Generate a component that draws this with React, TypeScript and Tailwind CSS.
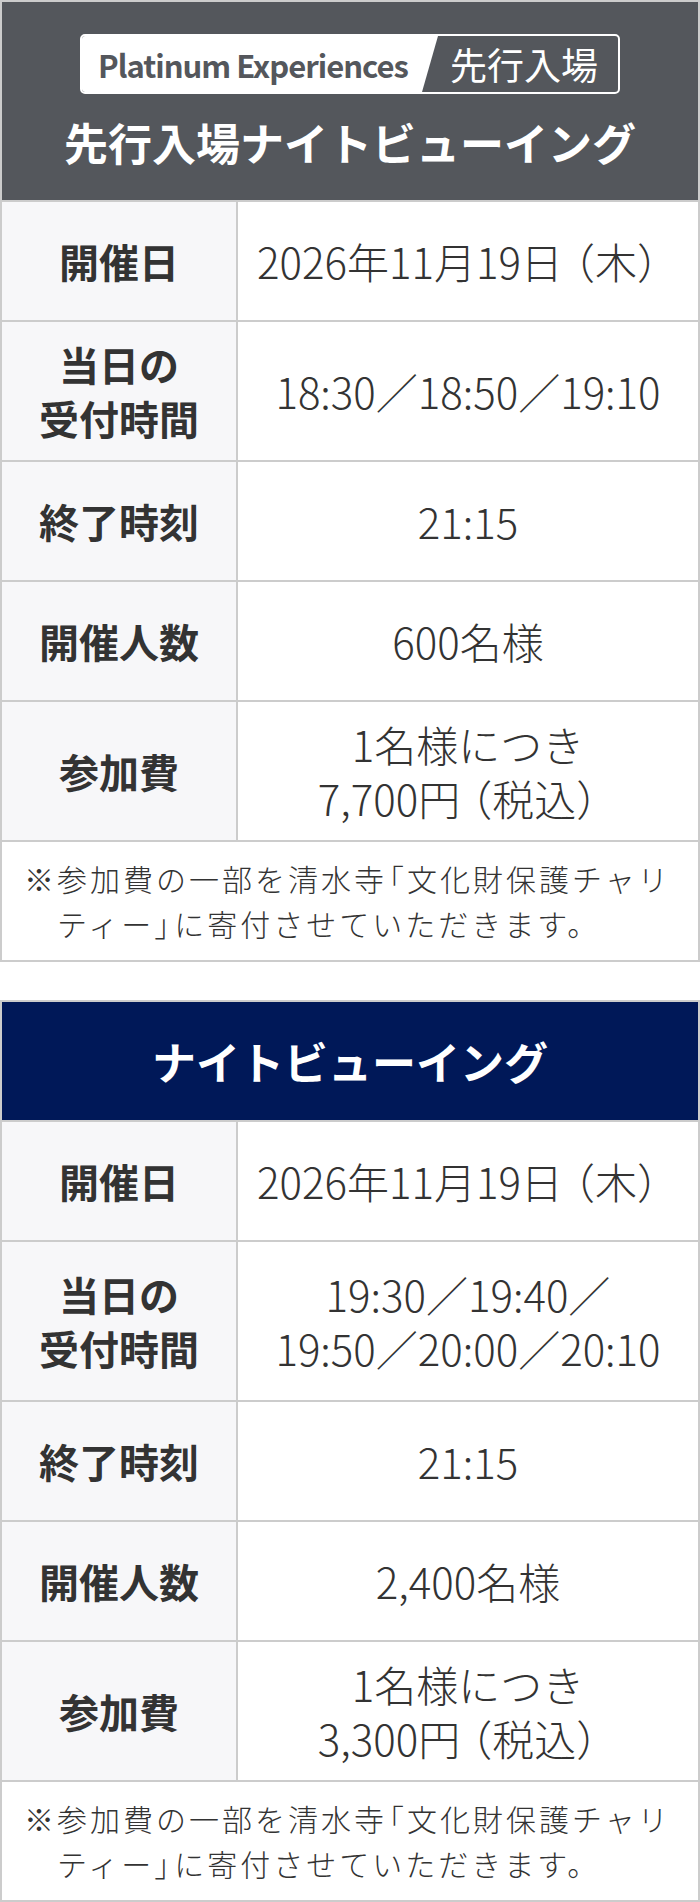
const font = "font-['Noto_Sans_CJK_JP','Noto_Sans',sans-serif]"

type Row = {
  label: string[]
  value: string[]
  h: string
}

// heights include the 2px bottom border
const early: Row[] = [
  { label: ["開催日"], value: ["2026年11月19日（木）"], h: "h-[120px]" },
  { label: ["当日の", "受付時間"], value: ["18:30／18:50／19:10"], h: "h-[140px]" },
  { label: ["終了時刻"], value: ["21:15"], h: "h-[120px]" },
  { label: ["開催人数"], value: ["600名様"], h: "h-[120px]" },
  { label: ["参加費"], value: ["1名様につき", "7,700円（税込）"], h: "h-[140px]" },
]

const night: Row[] = [
  { label: ["開催日"], value: ["2026年11月19日（木）"], h: "h-[120px]" },
  { label: ["当日の", "受付時間"], value: ["19:30／19:40／", "19:50／20:00／20:10"], h: "h-[160px]" },
  { label: ["終了時刻"], value: ["21:15"], h: "h-[120px]" },
  { label: ["開催人数"], value: ["2,400名様"], h: "h-[120px]" },
  { label: ["参加費"], value: ["1名様につき", "3,300円（税込）"], h: "h-[140px]" },
]

// the opening paren sits tight to the previous glyph in the design
const Value = ({ text }: { text: string }) => {
  const idx = text.indexOf("（")
  if (idx < 1) return <>{text}</>
  return (
    <>
      {text.slice(0, idx - 1)}
      <span className="tracking-[-10px]">{text[idx - 1]}</span>
      {text.slice(idx)}
    </>
  )
}

const InfoRow = ({ row }: { row: Row }) => (
  <div className={`flex border-b-2 border-[#cccccc] ${row.h}`}>
    <div className="w-[236px] shrink-0 bg-[#f7f7f9] border-r-2 border-[#cccccc] flex items-center justify-center text-center font-bold text-[40px] leading-[54px] text-[#333333]">
      <p className="whitespace-nowrap">
        {row.label.map((l, i) => (
          <span key={i}>
            {i > 0 && <br />}
            {l}
          </span>
        ))}
      </p>
    </div>
    <div className="flex-1 flex items-center justify-center text-center font-light text-[42px] leading-[54px] text-[#333333]">
      <p className="whitespace-nowrap">
        {row.value.map((l, i) => (
          <span key={i}>
            {i > 0 && <br />}
            <Value text={l} />
          </span>
        ))}
      </p>
    </div>
  </div>
)

const Note = () => (
  <div className="h-[118px] flex items-center pl-[22px] pr-[8px] font-light text-[30px] leading-[45px] tracking-[3px] text-[#333333]">
    <div className="flex">
      <span className="shrink-0">※</span>
      <span>
        参加費の一部を清水<span className="tracking-[-10px]">寺</span>「文化財保護チャリ
        <br />
        ティー<span className="tracking-[-10px]">」</span>に寄付させていただきます。
      </span>
    </div>
  </div>
)

const Badge = () => (
  <div className="w-[540px] h-[60px] flex rounded-[5px] border-2 border-white overflow-hidden">
    <div className="w-[356px] shrink-0 bg-white flex items-center pl-[16px] [clip-path:polygon(0_0,100%_0,calc(100%-16px)_100%,0_100%)]">
      <span className="text-[31px] tracking-[-1px] font-bold text-[#54575c] leading-none whitespace-nowrap">
        Platinum Experiences
      </span>
    </div>
    <div className="flex-1 -ml-[8px] flex items-center justify-center text-[37px] text-white leading-none">
      先行入場
    </div>
  </div>
)

export default function App() {
  return (
    <div className={`${font} w-[700px] bg-white`}>
      {/* 先行入場ナイトビューイング */}
      <section className="border-2 border-[#cccccc]">
        <div className="h-[200px] bg-[#54575c] border-b-2 border-[#cccccc] flex flex-col items-center pt-[32px]">
          <Badge />
          <h2 className="mt-[26px] text-[44px] leading-[44px] font-bold text-white">
            先行入場ナイトビューイング
          </h2>
        </div>
        {early.map((r, i) => (
          <InfoRow key={i} row={r} />
        ))}
        <Note />
      </section>

      {/* ナイトビューイング */}
      <section className="mt-[38px] border-2 border-[#cccccc]">
        <div className="h-[120px] bg-[#001858] border-b-2 border-[#cccccc] flex items-center justify-center">
          <h2 className="text-[44px] leading-[44px] font-bold text-white">ナイトビューイング</h2>
        </div>
        {night.map((r, i) => (
          <InfoRow key={i} row={r} />
        ))}
        <Note />
      </section>
    </div>
  )
}
